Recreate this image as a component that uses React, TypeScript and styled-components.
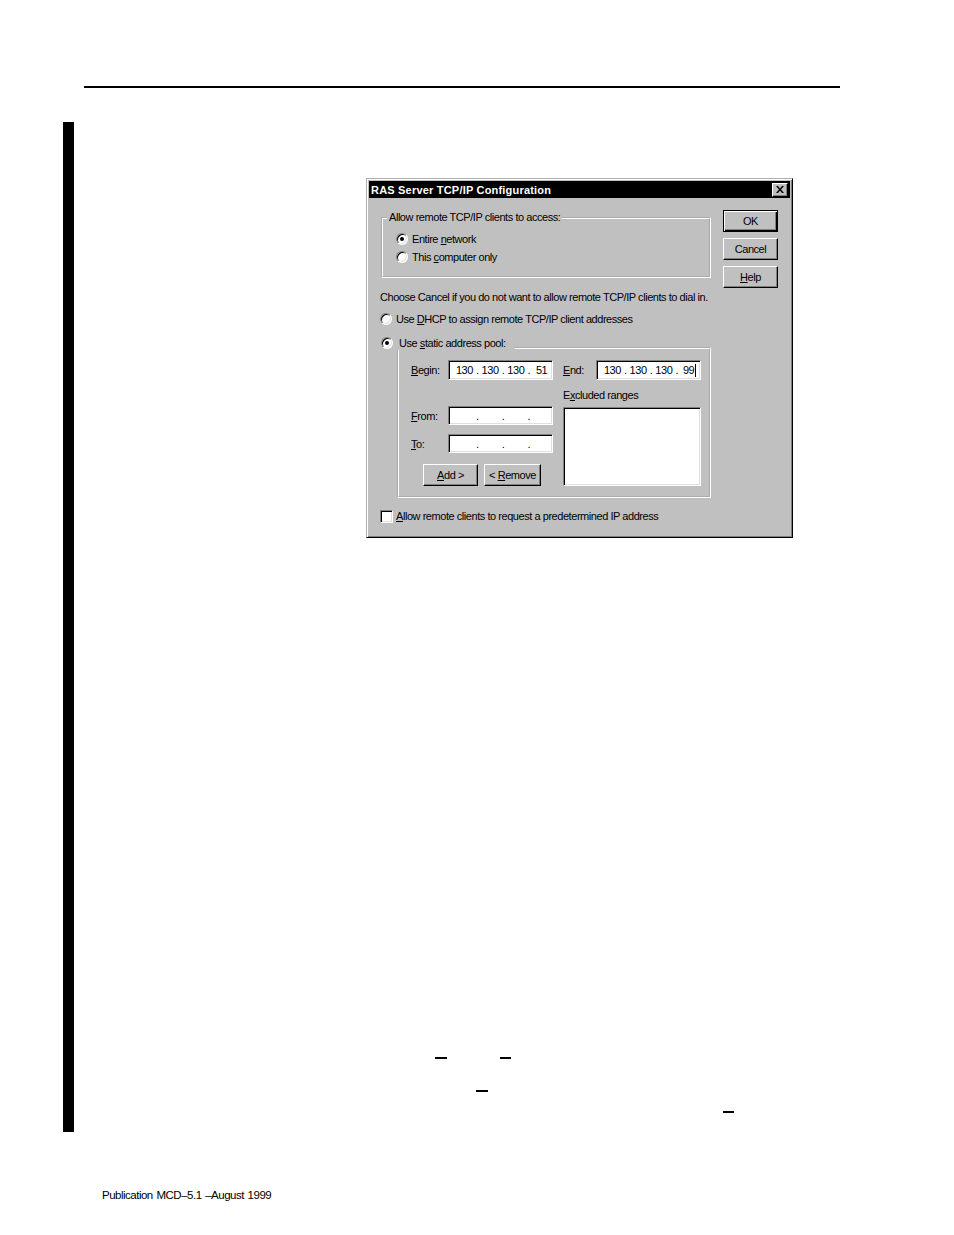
import React from "react";
import styled, { createGlobalStyle } from "styled-components";

const UI = `"Liberation Sans", Arial, sans-serif`;

const Global = createGlobalStyle`
  html, body { margin: 0; padding: 0; background: #fff; }
  body { font-family: ${UI}; color: #000; }
  * { box-sizing: border-box; }
`;

const Page = styled.div`
  width: 954px;
  height: 1235px;
  overflow: hidden;
  background: #fff;
  display: flex;
  flex-direction: column;
`;

const TopRule = styled.div`
  margin: 86px 0 0 84px;
  width: 756px;
  height: 2px;
  background: #000;
`;

const Main = styled.div`
  display: flex;
  margin-top: 34px;
  height: 1010px;
`;

const SideBar = styled.div`
  margin-left: 63px;
  width: 11px;
  background: #000;
`;

const Content = styled.div`
  padding: 56px 0 0 292px;
  display: flex;
  flex-direction: column;
`;

const Dialog = styled.div`
  width: 427px;
  height: 360px;
  background: #c0c0c0;
  border: 1px solid;
  border-color: #b0b0b0 #000 #000 #b0b0b0;
  box-shadow: inset 1px 1px 0 #fff, inset -1px -1px 0 #808080;
  padding: 2px;
  display: flex;
  flex-direction: column;
  font-family: ${UI};
  font-size: 11px;
  line-height: 14px;
  letter-spacing: -0.45px;
`;

const TitleBar = styled.div`
  height: 17px;
  background: #000;
  display: flex;
  align-items: center;
  justify-content: space-between;
  padding: 0 2px 0 2px;
`;

const TitleText = styled.span`
  color: #fff;
  font-weight: bold;
  font-size: 11px;
  letter-spacing: 0.2px;
`;

const CloseBtn = styled.div`
  width: 16px;
  height: 14px;
  background: #c0c0c0;
  border: 1px solid;
  border-color: #fff #000 #000 #fff;
  box-shadow: inset -1px -1px 0 #808080;
  display: flex;
  align-items: center;
  justify-content: center;
`;

const Body = styled.div`
  flex: 1;
  display: grid;
  grid-template-columns: 331px 55px;
  column-gap: 12px;
  padding: 12px 12px 0 11px;
`;

const LeftCol = styled.div`
  display: flex;
  flex-direction: column;
`;

const RightCol = styled.div`
  display: flex;
  flex-direction: column;
  gap: 6px;
`;

const Etch = `2px groove #fff`;

const GroupHead = styled.div<{ $indent: number; $mt?: number }>`
  display: flex;
  height: 14px;
  margin-left: ${(p) => p.$indent}px;
  margin-top: ${(p) => p.$mt ?? 0}px;
`;

const HeadCorner = styled.div`
  width: 6px;
  margin-top: 7px;
  border-top: ${Etch};
  border-left: ${Etch};
`;

const HeadLine = styled.div<{ $drop: number }>`
  flex: 1;
  margin-top: ${(p) => p.$drop}px;
  border-top: ${Etch};
  border-right: ${Etch};
`;

const Legend = styled.span<{ $gap?: number }>`
  padding: 0 ${(p) => p.$gap ?? 2}px 0 2px;
  white-space: nowrap;
`;

const GroupBody = styled.div<{ $indent: number; $pt: number; $pb: number; $pl: number }>`
  margin-left: ${(p) => p.$indent}px;
  border-left: ${Etch};
  border-right: ${Etch};
  border-bottom: ${Etch};
  padding: ${(p) => p.$pt}px 0 ${(p) => p.$pb}px ${(p) => p.$pl}px;
  display: flex;
  flex-direction: column;
`;

const OptionRow = styled.div<{ $mt?: number }>`
  display: flex;
  align-items: center;
  height: 14px;
  margin-top: ${(p) => p.$mt ?? 0}px;
  white-space: nowrap;
`;

const RadioCircle = styled.span`
  width: 12px;
  height: 12px;
  border-radius: 50%;
  background: #fff;
  border: 1px solid;
  border-color: #808080 #fff #fff #808080;
  box-shadow: inset 1px 1px 0 #000, inset -1px -1px 0 #dfdfdf;
  display: flex;
  align-items: center;
  justify-content: center;
  margin-right: 4px;
  flex: none;
`;

const RadioDot = styled.span`
  width: 4px;
  height: 4px;
  border-radius: 50%;
  background: #000;
`;

const CheckBox = styled.span`
  width: 13px;
  height: 13px;
  background: #fff;
  border: 1px solid;
  border-color: #808080 #fff #fff #808080;
  box-shadow: inset 1px 1px 0 #000, inset -1px -1px 0 #dfdfdf;
  margin-right: 3px;
  flex: none;
`;

const U = styled.span`
  text-decoration: underline;
  text-underline-offset: 1px;
`;

const Note = styled.div`
  margin-top: 12px;
  height: 14px;
  white-space: nowrap;
`;

const Btn = styled.div<{ $default?: boolean; $w?: number; $h?: number }>`
  width: ${(p) => p.$w ?? 55}px;
  height: ${(p) => p.$h ?? 22}px;
  display: flex;
  align-items: center;
  justify-content: center;
  background: #c0c0c0;
  border: 1px solid;
  border-color: ${(p) => (p.$default ? "#000" : "#fff #000 #000 #fff")};
  box-shadow: ${(p) =>
    p.$default
      ? "inset 1px 1px 0 #fff, inset -1px -1px 0 #000, inset -2px -2px 0 #808080"
      : "inset -1px -1px 0 #808080"};
  white-space: nowrap;
`;

const FieldRow = styled.div`
  display: flex;
  align-items: center;
`;

const FieldLabel = styled.span<{ $w: number; $ml?: number }>`
  width: ${(p) => p.$w}px;
  margin-left: ${(p) => p.$ml ?? 0}px;
  flex: none;
`;

const Sunken = styled.div<{ $w: number; $h: number }>`
  width: ${(p) => p.$w}px;
  height: ${(p) => p.$h}px;
  background: #fff;
  border: 1px solid;
  border-color: #808080 #fff #fff #808080;
  box-shadow: inset 1px 1px 0 #000, inset -1px -1px 0 #dfdfdf;
  flex: none;
`;

const IpBox = styled(Sunken)`
  display: flex;
  align-items: center;
  padding-left: 5px;
  overflow: hidden;
`;

const Octet = styled.span`
  width: 21px;
  display: flex;
  justify-content: center;
  align-items: center;
`;

const Dot = styled.span`
  width: 5px;
  text-align: center;
`;

const Caret = styled.span`
  width: 1px;
  height: 13px;
  background: #000;
  margin-left: 1px;
`;

const Lower = styled.div`
  display: flex;
`;

const LowerLeft = styled.div`
  width: 142px;
  padding-top: 26px;
  display: flex;
  flex-direction: column;
  gap: 9px;
`;

const LowerRight = styled.div`
  margin-left: 10px;
  display: flex;
  flex-direction: column;
  padding-top: 8px;
  gap: 5px;
`;

const BtnRow = styled.div`
  display: flex;
  gap: 6px;
  margin-left: 12px;
  margin-top: 2px;
`;

const MarkRow = styled.div<{ $mt: number }>`
  display: flex;
  margin-top: ${(p) => p.$mt}px;
  height: 2px;
`;

const Mark = styled.span<{ $ml: number; $w: number }>`
  margin-left: ${(p) => p.$ml}px;
  width: ${(p) => p.$w}px;
  height: 2px;
  background: #000;
`;

const Footer = styled.div`
  margin: 56px 0 0 102px;
  font-family: ${UI};
  font-size: 11.5px;
  line-height: 14px;
  letter-spacing: -0.5px;
  word-spacing: 1px;
  white-space: nowrap;
`;

function Radio({ checked }: { checked?: boolean }) {
  return <RadioCircle>{checked && <RadioDot />}</RadioCircle>;
}

function Ip({ values, caret, h }: { values?: string[]; caret?: boolean; h: number }) {
  const v = values ?? ["", "", "", ""];
  return (
    <IpBox $w={105} $h={h}>
      {v.map((o, i) => (
        <React.Fragment key={i}>
          <Octet>
            {o}
            {caret && i === 3 && <Caret />}
          </Octet>
          {i < 3 && <Dot>.</Dot>}
        </React.Fragment>
      ))}
    </IpBox>
  );
}

export default function App() {
  return (
    <>
      <Global />
      <Page>
        <TopRule />
        <Main>
          <SideBar />
          <Content>
            <Dialog>
              <TitleBar>
                <TitleText>RAS Server TCP/IP Configuration</TitleText>
                <CloseBtn>
                  <svg width="8" height="7" viewBox="0 0 8 7">
                    <path d="M0 0h2l2 2.5L6 0h2L5 3.5 8 7H6L4 4.5 2 7H0l3-3.5z" fill="#000" />
                  </svg>
                </CloseBtn>
              </TitleBar>
              <Body>
                <LeftCol>
                  <GroupHead $indent={1}>
                    <HeadCorner />
                    <Legend>Allow remote TCP/IP clients to access:</Legend>
                    <HeadLine $drop={7} />
                  </GroupHead>
                  <GroupBody $indent={1} $pt={8} $pb={12} $pl={13}>
                    <OptionRow>
                      <Radio checked />
                      <span>
                        Entire <U>n</U>etwork
                      </span>
                    </OptionRow>
                    <OptionRow $mt={4}>
                      <Radio />
                      <span>
                        This <U>c</U>omputer only
                      </span>
                    </OptionRow>
                  </GroupBody>
                  <Note>Choose Cancel if you do not want to allow remote TCP/IP clients to dial in.</Note>
                  <OptionRow $mt={8}>
                    <Radio />
                    <span>
                      Use <U>D</U>HCP to assign remote TCP/IP client addresses
                    </span>
                  </OptionRow>
                  <GroupHead $indent={1} $mt={10}>
                    <OptionRow>
                      <Radio checked />
                      <Legend $gap={9}>
                        Use <U>s</U>tatic address pool:
                      </Legend>
                    </OptionRow>
                    <HeadLine $drop={11} />
                  </GroupHead>
                  <GroupBody $indent={17} $pt={10} $pb={10} $pl={12}>
                    <FieldRow>
                      <FieldLabel $w={37}>
                        <U>B</U>egin:
                      </FieldLabel>
                      <Ip h={20} values={["130", "130", "130", "51"]} />
                      <FieldLabel $w={33} $ml={10}>
                        <U>E</U>nd:
                      </FieldLabel>
                      <Ip h={20} values={["130", "130", "130", "99"]} caret />
                    </FieldRow>
                    <Lower>
                      <LowerLeft>
                        <FieldRow>
                          <FieldLabel $w={37}>
                            <U>F</U>rom:
                          </FieldLabel>
                          <Ip h={19} />
                        </FieldRow>
                        <FieldRow>
                          <FieldLabel $w={37}>
                            <U>T</U>o:
                          </FieldLabel>
                          <Ip h={19} />
                        </FieldRow>
                        <BtnRow>
                          <Btn $w={55}>
                            <span>
                              <U>A</U>dd &gt;
                            </span>
                          </Btn>
                          <Btn $w={57}>
                            <span>
                              &lt; <U>R</U>emove
                            </span>
                          </Btn>
                        </BtnRow>
                      </LowerLeft>
                      <LowerRight>
                        <span>
                          E<U>x</U>cluded ranges
                        </span>
                        <Sunken $w={138} $h={79} />
                      </LowerRight>
                    </Lower>
                  </GroupBody>
                  <OptionRow $mt={11}>
                    <CheckBox />
                    <span>
                      <U>A</U>llow remote clients to request a predetermined IP address
                    </span>
                  </OptionRow>
                </LeftCol>
                <RightCol>
                  <Btn $default>OK</Btn>
                  <Btn>Cancel</Btn>
                  <Btn>
                    <span>
                      <U>H</U>elp
                    </span>
                  </Btn>
                </RightCol>
              </Body>
            </Dialog>
            <MarkRow $mt={519}>
              <Mark $ml={69} $w={12} />
              <Mark $ml={53} $w={11} />
            </MarkRow>
            <MarkRow $mt={31}>
              <Mark $ml={110} $w={12} />
            </MarkRow>
            <MarkRow $mt={19}>
              <Mark $ml={357} $w={11} />
            </MarkRow>
          </Content>
        </Main>
        <Footer>Publication MCD–5.1 –August 1999</Footer>
      </Page>
    </>
  );
}
